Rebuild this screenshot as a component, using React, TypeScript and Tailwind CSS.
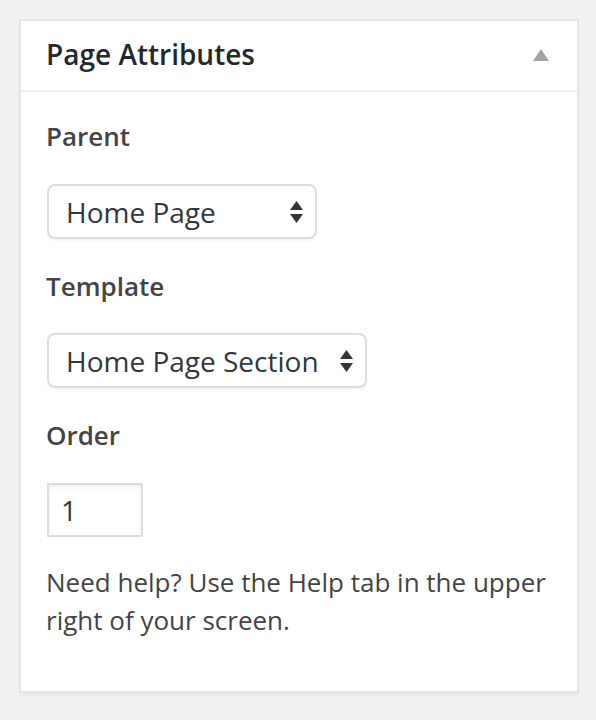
export default function App() {
  return (
    <div className="min-h-[720px] bg-[#f1f1f1] p-[19px] font-['Open_Sans',sans-serif]">
      <div className="w-[560px] border-2 border-[#e5e5e5] bg-white shadow-[0_2px_2px_rgba(0,0,0,0.04)]">
        {/* Header */}
        <div className="flex items-center justify-between border-b-2 border-[#eee] pl-[25px] pr-[27px] pt-[14px] pb-[16px]">
          <h2 className="text-[28px] leading-[39px] font-semibold text-[#23282d]">Page Attributes</h2>
          <svg width="16" height="12" viewBox="0 0 16 12" className="mr-[1px]">
            <path d="M8 0L16 12H0Z" fill="#a0a5aa" />
          </svg>
        </div>

        {/* Body */}
        <div className="pl-[25px] pr-[24px] pb-[52px]">
          <p className="mt-[26px] text-[26px] leading-[36px] font-semibold text-[#444]">Parent</p>
          <SelectBox label="Home Page" width="w-[270px]" className="mt-[30px]" />

          <p className="mt-[29px] text-[26px] leading-[36px] font-semibold text-[#444]">Template</p>
          <SelectBox label="Home Page Section" width="w-[320px]" className="mt-[29px]" />

          <p className="mt-[29px] text-[26px] leading-[36px] font-semibold text-[#444]">Order</p>
          <div className="mt-[30px] ml-[1px] flex h-[54px] w-[96px] items-center border-2 border-[#ddd] pl-[12px] text-[28px] text-[#32373c] shadow-[inset_0_2px_4px_rgba(0,0,0,0.07)]">
            1
          </div>

          <p className="mt-[26px] text-[26px] leading-[38px] text-[#444]">
            Need help? Use the Help tab in the upper right of your screen.
          </p>
        </div>
      </div>
    </div>
  );
}

function SelectBox({ label, width, className }: { label: string; width: string; className?: string }) {
  return (
    <div
      className={`${className} ${width} ml-[1px] flex h-[55px] items-center justify-between rounded-[8px] border-2 border-[#ddd] bg-white pl-[17px] pr-[12px] text-[28px] text-[#32373c] shadow-[0_2px_2px_rgba(0,0,0,0.04)]`}
    >
      <span className="leading-none">{label}</span>
      <svg width="13" height="22" viewBox="0 0 13 22">
        <path d="M6.5 0L13 9H0Z" fill="#32373c" />
        <path d="M0 13H13L6.5 22Z" fill="#32373c" />
      </svg>
    </div>
  );
}
